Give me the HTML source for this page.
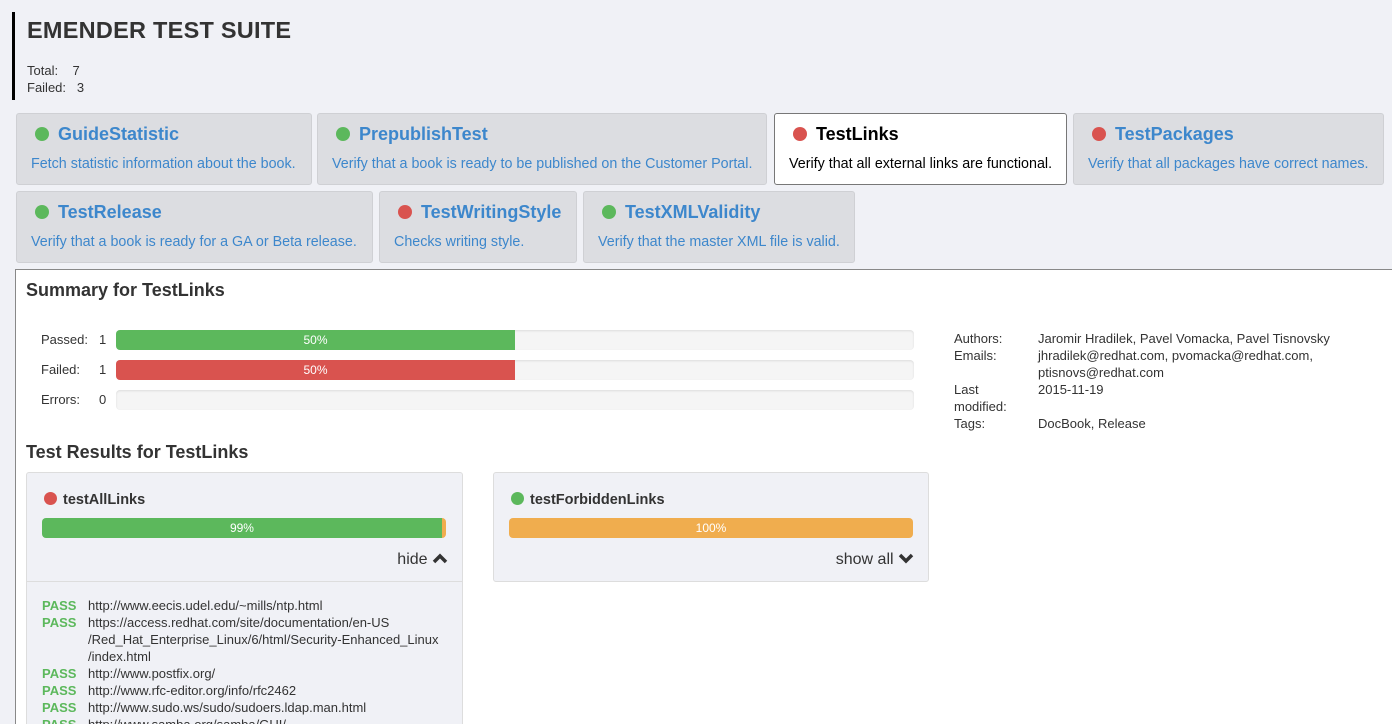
<!DOCTYPE html>
<html><head><meta charset="utf-8"><style>
*{box-sizing:border-box;margin:0;padding:0}
html,body{width:1392px;height:724px;overflow:hidden}
body{background:#f0f1f6;font-family:"Liberation Sans",sans-serif;color:#333;position:relative}
table{border-collapse:collapse}
.abs{position:absolute}
.hdr{left:12px;top:12px;height:88px;border-left:3px solid #000;padding-left:12px}
.hdr h1{font-size:23.5px;font-weight:bold;margin-top:5px;color:#333;letter-spacing:0.25px}
.hdr .st{font-size:13px;line-height:17px;margin-top:18px}
.card{position:absolute;height:72px;background:#dcdde1;border:1px solid #cfd0d4;border-radius:3px;padding:0 14px}
.card.sel{background:#fff;border-color:#777}
.card .t{font-size:18px;font-weight:bold;color:#3d87cc;margin-top:9px;line-height:22px;white-space:nowrap}
.card.sel .t{color:#000}
.card .d{font-size:14.3px;color:#3d87cc;margin-top:11px;white-space:nowrap}
.card.sel .d{color:#000}
.dot{display:inline-block;width:14px;height:14px;border-radius:50%;margin:0 9px 0 4px;vertical-align:-1px}
.g{background:#5cb85c}.r{background:#d9534f}
.main{left:15px;top:269px;width:1377px;height:455px;background:#fff;border-top:1px solid #888;border-left:1px solid #888;overflow:hidden}
h2{font-size:18px;font-weight:bold;color:#333;position:absolute}
.lbl{font-size:13px;position:absolute}
.bar{position:absolute;left:100px;width:798px;height:20px;background:#f5f5f5;border-radius:4px;box-shadow:inset 0 1px 2px rgba(0,0,0,.1);overflow:hidden}
.bar div{height:100%;color:#fff;font-size:12px;text-align:center;line-height:20px}
.meta{position:absolute;font-size:13px;line-height:17px}
.meta td{vertical-align:top;padding:0}
.tc{position:absolute;background:#f0f1f6;border:1px solid #ddd;border-radius:3px}
.tc .n{position:absolute;left:14px;top:19px;font-size:14.5px;font-weight:bold;color:#333}
.tc .pb{position:absolute;left:15px;width:404px;top:45px;height:20px;border-radius:4px;overflow:hidden;display:flex;font-size:12px;color:#fff;line-height:20px;text-align:center}
.tc .tg{position:absolute;right:14px;top:78px;font-size:16px;color:#333}
.list{position:absolute;left:15px;top:124px;font-size:13px;line-height:17px}
.list td{vertical-align:top;padding:0}
.list .p{color:#5cb85c;font-weight:bold;width:46px}
</style></head><body>
<div class="abs hdr"><h1>EMENDER TEST SUITE</h1>
<div class="st"><div>Total:&nbsp;&nbsp;&nbsp; 7</div><div>Failed:&nbsp;&nbsp; 3</div></div></div>

<div class="card" style="left:16px;top:113px;width:296px"><div class="t"><span class="dot g"></span>GuideStatistic</div><div class="d">Fetch statistic information about the book.</div></div>
<div class="card" style="left:317px;top:113px;width:450px"><div class="t"><span class="dot g"></span>PrepublishTest</div><div class="d">Verify that a book is ready to be published on the Customer Portal.</div></div>
<div class="card sel" style="left:774px;top:113px;width:293px"><div class="t"><span class="dot r"></span>TestLinks</div><div class="d">Verify that all external links are functional.</div></div>
<div class="card" style="left:1073px;top:113px;width:311px"><div class="t"><span class="dot r"></span>TestPackages</div><div class="d">Verify that all packages have correct names.</div></div>
<div class="card" style="left:16px;top:191px;width:357px"><div class="t"><span class="dot g"></span>TestRelease</div><div class="d">Verify that a book is ready for a GA or Beta release.</div></div>
<div class="card" style="left:379px;top:191px;width:198px"><div class="t"><span class="dot r"></span>TestWritingStyle</div><div class="d">Checks writing style.</div></div>
<div class="card" style="left:583px;top:191px;width:272px"><div class="t"><span class="dot g"></span>TestXMLValidity</div><div class="d">Verify that the master XML file is valid.</div></div>

<div class="abs main">
<h2 style="left:10px;top:10px">Summary for TestLinks</h2>
<div class="lbl" style="left:25px;top:62px">Passed:</div><div class="lbl" style="left:83px;top:62px">1</div>
<div class="bar" style="top:60px"><div style="width:50%;background:#5cb85c">50%</div></div>
<div class="lbl" style="left:25px;top:92px">Failed:</div><div class="lbl" style="left:83px;top:92px">1</div>
<div class="bar" style="top:90px"><div style="width:50%;background:#d9534f">50%</div></div>
<div class="lbl" style="left:25px;top:122px">Errors:</div><div class="lbl" style="left:83px;top:122px">0</div>
<div class="bar" style="top:120px"></div>
<table class="meta" style="left:938px;top:60px"><tr><td style="width:84px">Authors:</td><td>Jaromir Hradilek, Pavel Vomacka, Pavel Tisnovsky</td></tr>
<tr><td>Emails:</td><td>jhradilek@redhat.com, pvomacka@redhat.com,<br>ptisnovs@redhat.com</td></tr>
<tr><td>Last<br>modified:</td><td>2015-11-19</td></tr>
<tr><td>Tags:</td><td>DocBook, Release</td></tr></table>
<h2 style="left:10px;top:172px">Test Results for TestLinks</h2>

<div class="tc" style="left:10px;top:202px;width:437px;height:270px">
<div class="n"><span class="dot r" style="margin:0 6px 0 3px;width:13px;height:13px"></span>testAllLinks</div>
<div class="pb"><div style="width:99%;background:#5cb85c">99%</div><div style="flex:1;background:#f0ad4e"></div></div>
<div class="tg">hide <svg width="16" height="12" viewBox="0 0 16 12" style="vertical-align:0"><path d="M2 10 L8 4 L14 10" fill="none" stroke="#333" stroke-width="3.5"/></svg></div>
<div style="position:absolute;left:0;right:0;top:108px;border-top:1px solid #ddd"></div>
<table class="list">
<tr><td class="p">PASS</td><td>http://www.eecis.udel.edu/~mills/ntp.html</td></tr>
<tr><td class="p">PASS</td><td>https://access.redhat.com/site/documentation/en-US<br>/Red_Hat_Enterprise_Linux/6/html/Security-Enhanced_Linux<br>/index.html</td></tr>
<tr><td class="p">PASS</td><td>http://www.postfix.org/</td></tr>
<tr><td class="p">PASS</td><td>http://www.rfc-editor.org/info/rfc2462</td></tr>
<tr><td class="p">PASS</td><td>http://www.sudo.ws/sudo/sudoers.ldap.man.html</td></tr>
<tr><td class="p">PASS</td><td>http://www.samba.org/samba/GUI/</td></tr>
</table>
</div>

<div class="tc" style="left:477px;top:202px;width:436px;height:110px">
<div class="n"><span class="dot g" style="margin:0 6px 0 3px;width:13px;height:13px"></span>testForbiddenLinks</div>
<div class="pb"><div style="width:100%;background:#f0ad4e">100%</div></div>
<div class="tg">show all <svg width="16" height="12" viewBox="0 0 16 12" style="vertical-align:0"><path d="M2 3 L8 9 L14 3" fill="none" stroke="#333" stroke-width="3.5"/></svg></div>
</div>
</div>
</body></html>
